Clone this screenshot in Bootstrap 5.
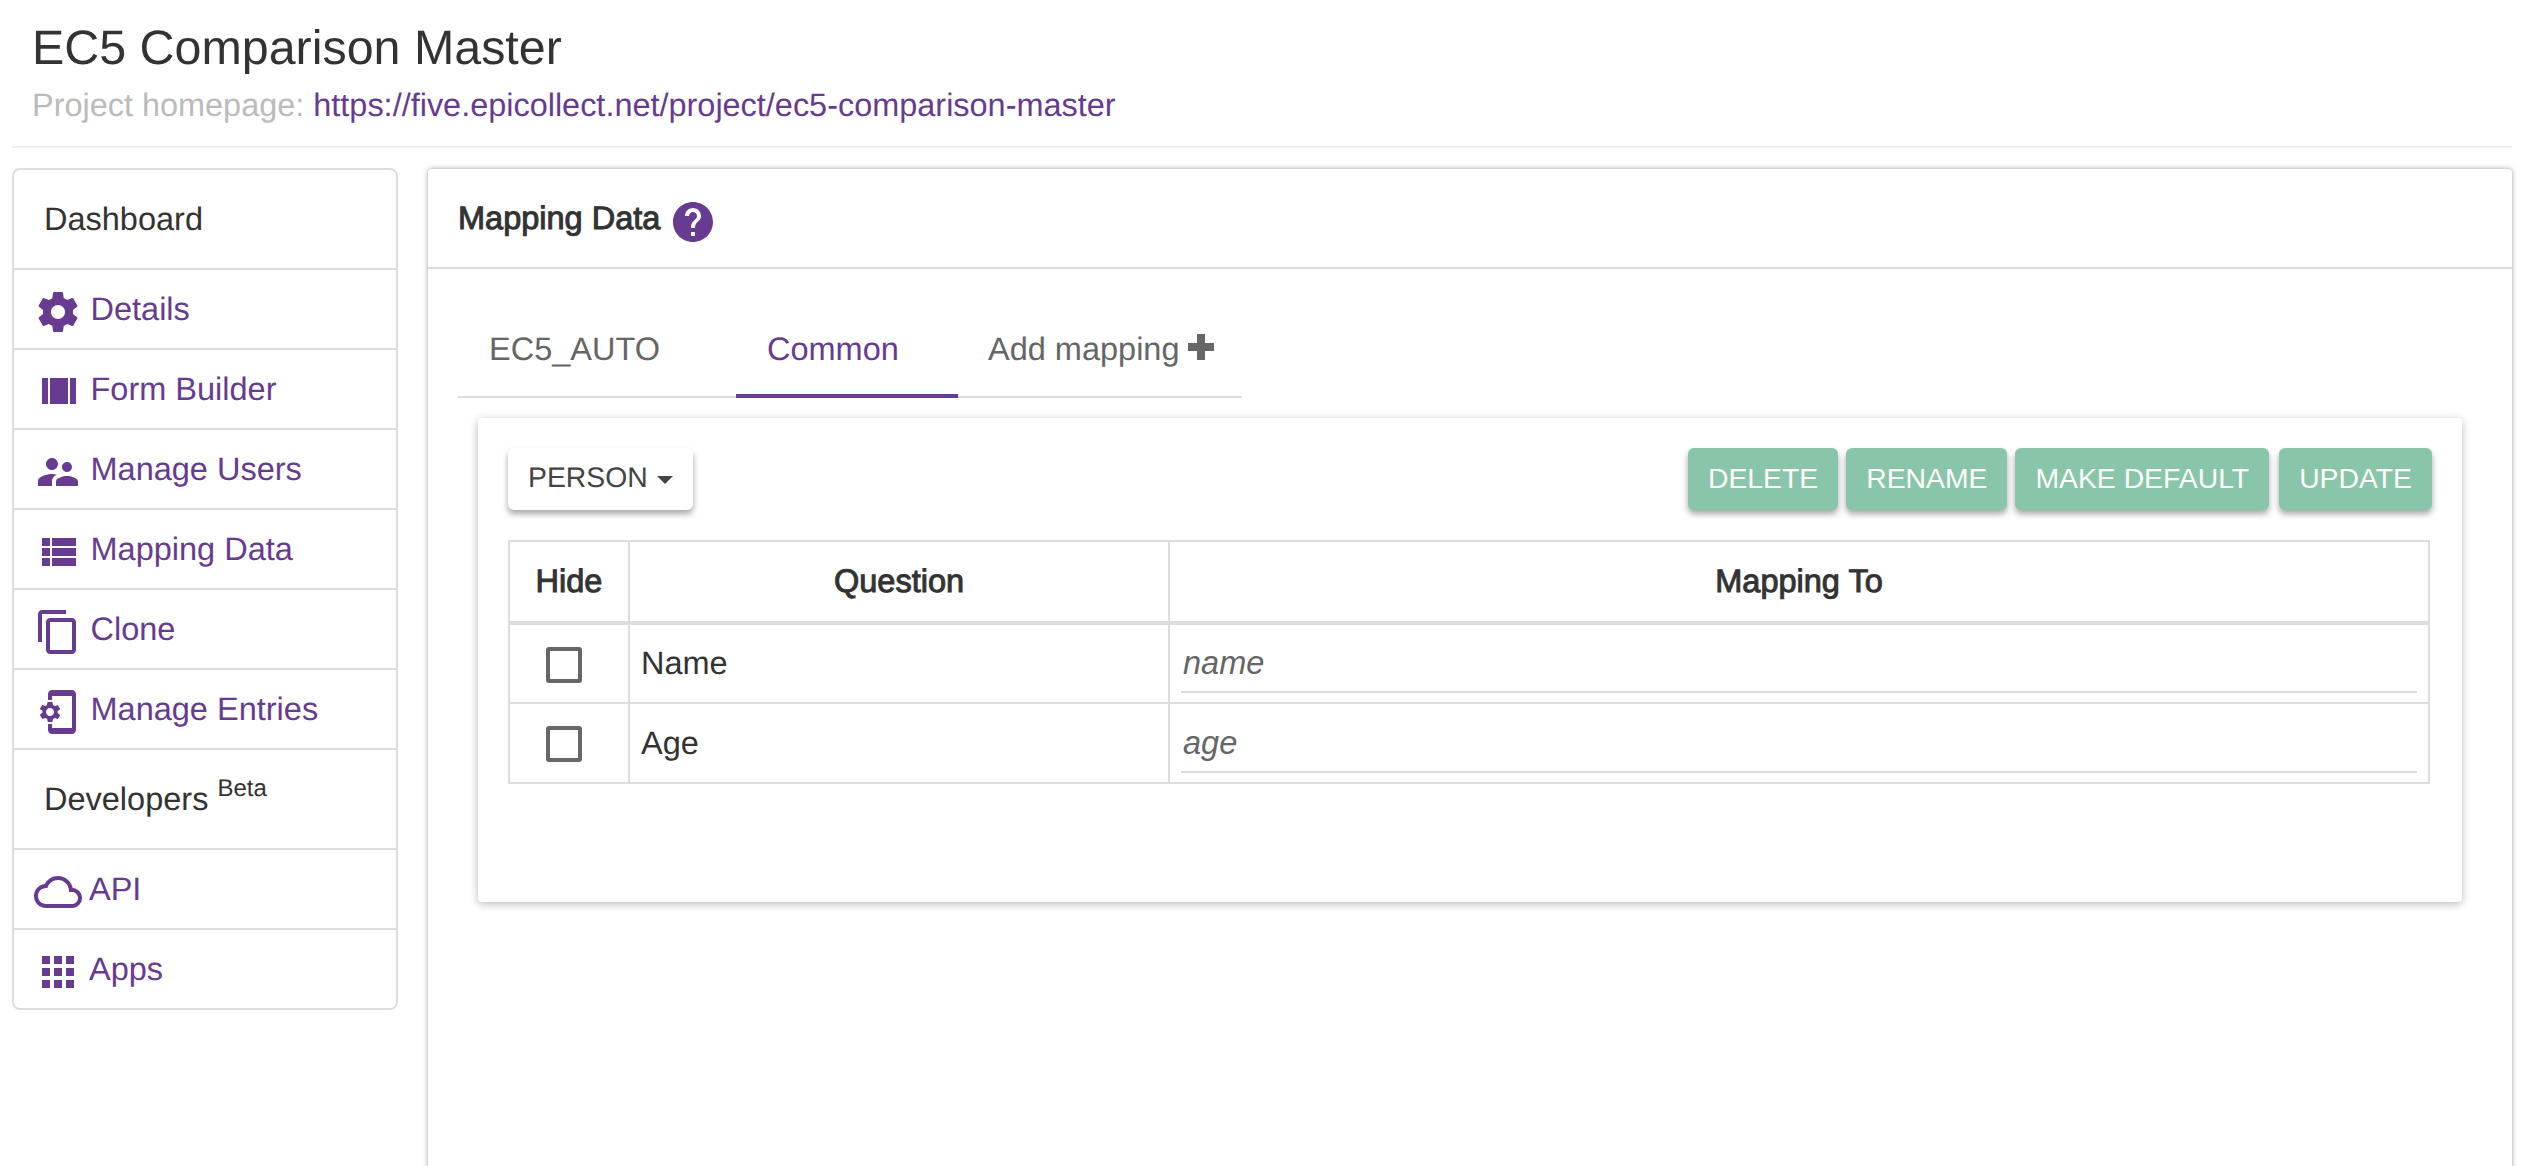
<!DOCTYPE html>
<html lang="en">
<head>
<meta charset="utf-8">
<title>Mapping Data</title>
<link rel="stylesheet" href="https://cdn.jsdelivr.net/npm/bootstrap@5.3.0/dist/css/bootstrap.min.css">
<style>
html,body{height:100%;overflow:hidden}
body{font-family:"Liberation Sans",Arial,sans-serif;font-size:32.5px;color:#333;background:#fff;text-rendering:geometricPrecision}
a{color:#673c90;text-decoration:none}
.shell{height:100%;display:flex;flex-direction:column;padding:0 20px 0 12px}
.page-head{height:148px;border-bottom:2px solid #eee;padding:21px 0 0 20px;flex:none}
.page-title{font-size:48.4px;line-height:55px;font-weight:400;margin:0;color:#333}
.page-sub{font-size:32.45px;line-height:36px;color:#bbb;display:block;margin-top:11px}
.body-row{display:flex;gap:30px;flex:1;min-height:0;padding-top:20px}
.side-menu{width:386px;flex:none;align-self:flex-start;border:2px solid #ddd;border-radius:8px;overflow:hidden}
.side-item{height:80px;border-top:2px solid #ddd;display:flex;align-items:center;gap:8.5px;padding-left:20px;color:#673c90}
.side-item.tight{gap:7px}
.side-head{height:100px;border-top:2px solid #ddd;display:flex;align-items:center;padding-left:30px;color:#333}
.side-head:first-child{border-top:0;height:98px;padding-top:1px}
.side-head sup{font-size:24px;top:-.4em;margin-left:9px;line-height:0}
.side-ico{width:48px;height:48px;fill:#673c90;flex:none;margin-top:6px}
.main-panel{flex:1;min-width:0;border-radius:4px 4px 0 0;box-shadow:0 0 5px rgba(0,0,0,.4);background:#fff;margin:1px 0 -10px}
.panel-top{height:100px;border-bottom:2px solid #ddd;display:flex;align-items:center;padding:0 30px;gap:10px}
.stroke-txt{-webkit-text-stroke:1px currentColor}
.help-ico{width:48px;height:48px;fill:#673c90;margin:8px 0 0 -1px}
.panel-body{padding:30px 30px 0}
.tab-row{width:784px;height:99px;display:flex;border-bottom:2px solid #ddd}
.tab-cell{height:99px;padding:5px 30px 0 31px;display:flex;align-items:center;gap:8px;color:#666;border-bottom:4px solid transparent}
.tab-cell.on{color:#673c90;border-bottom-color:#673c90}
.tab-one{width:278px}
.tab-two{width:222px}
.tab-three{padding-left:30px;padding-right:0;white-space:nowrap}
.plus-ico{width:26px;height:26px;fill:#666;margin-top:-5px}
.map-card{margin:20px 20px 0;height:484px;background:#fff;border-radius:4px;box-shadow:0 2px 8px rgba(0,0,0,.28);padding:30px 32px 0 30px}
.tool-row{display:flex;justify-content:space-between}
.tool-right{display:flex;gap:8px;margin-right:-2px}
.raised{height:62px;font-size:28.35px;line-height:58px;padding:0 20px 2px;border:0;border-radius:6px;box-shadow:0 4px 6px rgba(0,0,0,.35);white-space:nowrap}
.raised-white{background:#fff;color:#444;display:flex;align-items:center;gap:9px}
.raised-green{background:#89c5a8;color:#fff}
.raised-last{margin-left:2px}
.caret-down{width:0;height:0;border:8px solid transparent;border-top-color:#444;border-bottom:0;margin-top:4px}
.map-table{width:1922px;margin-top:30px;table-layout:fixed;border-collapse:collapse;margin-bottom:0}
.map-table th,.map-table td{border:2px solid #ddd;padding:0;vertical-align:middle}
.map-table th{height:82px;border-bottom-width:4px;text-align:center;font-weight:400;color:#333;padding-bottom:1px}
.map-table td{height:80px;color:#333}
.name-cell{padding-left:11px!important}
.hide-box{width:36px;height:36px;border:4px solid #666;border-radius:3px;margin:2px 0 0 36px}
.map-input{display:block;width:calc(100% - 22px);margin:2px 11px 0;height:57px;border:0;border-bottom:2px solid #ddd;background:none;font-size:32.5px;font-style:italic;color:#666;padding:0 2px;outline:0;font-family:inherit}
.map-input::placeholder{color:#666;opacity:1}
</style>
</head>
<body>
<div class="shell">
  <header class="page-head">
    <h3 class="page-title">EC5 Comparison Master</h3>
    <span class="page-sub">Project homepage: <a href="#">https://five.epicollect.net/project/ec5-comparison-master</a></span>
  </header>
  <div class="body-row">
    <nav class="side-menu">
      <div class="side-head">Dashboard</div>
      <a class="side-item" href="#"><svg class="side-ico" viewBox="0 0 24 24"><path d="M19.43 12.98c.04-.32.07-.64.07-.98s-.03-.66-.07-.98l2.11-1.65c.19-.15.24-.42.12-.64l-2-3.46c-.12-.22-.39-.3-.61-.22l-2.49 1c-.52-.4-1.08-.73-1.69-.98l-.38-2.65C14.46 2.18 14.25 2 14 2h-4c-.25 0-.46.18-.49.42l-.38 2.65c-.61.25-1.17.59-1.69.98l-2.49-1c-.23-.09-.49 0-.61.22l-2 3.46c-.13.22-.07.49.12.64l2.11 1.65c-.04.32-.07.65-.07.98s.03.66.07.98l-2.11 1.65c-.19.15-.24.42-.12.64l2 3.46c.12.22.39.3.61.22l2.49-1c.52.4 1.08.73 1.69.98l.38 2.65c.03.24.24.42.49.42h4c.25 0 .46-.18.49-.42l.38-2.65c.61-.25 1.17-.59 1.69-.98l2.49 1c.23.09.49 0 .61-.22l2-3.46c.12-.22.07-.49-.12-.64l-2.11-1.65zM12 15.5c-1.93 0-3.5-1.57-3.5-3.5s1.57-3.5 3.5-3.5 3.5 1.57 3.5 3.5-1.57 3.5-3.5 3.5z"/></svg>Details</a>
      <a class="side-item" href="#"><svg class="side-ico" viewBox="0 0 24 24"><path d="M4 18h3V5H4v13zM18 5v13h3V5h-3zM8 18h9V5H8v13z"/></svg>Form Builder</a>
      <a class="side-item" href="#"><svg class="side-ico" viewBox="0 0 24 24"><path d="M16.5 12c1.38 0 2.49-1.12 2.49-2.5S17.88 7 16.5 7C15.12 7 14 8.12 14 9.5s1.12 2.5 2.5 2.5zM9 11c1.66 0 2.99-1.34 2.99-3S10.66 5 9 5C7.34 5 6 6.34 6 8s1.34 3 3 3zm7.5 3c-1.83 0-5.5.92-5.5 2.75V19h11v-2.25c0-1.83-3.67-2.75-5.5-2.75zM9 13c-2.33 0-7 1.17-7 3.5V19h7v-2.25c0-.85.33-2.34 2.37-3.47C10.5 13.1 9.66 13 9 13z"/></svg>Manage Users</a>
      <a class="side-item" href="#"><svg class="side-ico" viewBox="0 0 24 24"><path d="M4 14h4v-4H4v4zm0 5h4v-4H4v4zM4 9h4V5H4v4zm5 5h12v-4H9v4zm0 5h12v-4H9v4zM9 5v4h12V5H9z"/></svg>Mapping Data</a>
      <a class="side-item" href="#"><svg class="side-ico" viewBox="0 0 24 24"><path d="M16 1H4c-1.1 0-2 .9-2 2v14h2V3h12V1zm3 4H8c-1.1 0-2 .9-2 2v14c0 1.1.9 2 2 2h11c1.1 0 2-.9 2-2V7c0-1.1-.9-2-2-2zm0 16H8V7h11v14z"/></svg>Clone</a>
      <a class="side-item" href="#"><svg class="side-ico" viewBox="0 0 24 24"><path d="M11.8 12.5v-1l1.1-.8c.1-.1.1-.2.1-.3l-1-1.7c-.1-.1-.2-.2-.3-.1l-1.3.4c-.3-.2-.6-.4-.9-.5l-.2-1.3c0-.1-.1-.2-.3-.2H7c-.1 0-.2.1-.3.2l-.2 1.3c-.3.1-.6.3-.9.5l-1.3-.5c-.1 0-.2 0-.3.1l-1 1.7c-.1.1 0 .2.1.3l1.1.8v1l-1.1.8c-.1.2-.1.3-.1.4l1 1.7c.1.1.2.2.3.1l1.4-.4c.3.2.6.4.9.5l.2 1.3c-.1.1.1.2.2.2h2c.1 0 .2-.1.3-.2l.2-1.3c.3-.1.6-.3.9-.5l1.3.5c.1 0 .2 0 .3-.1l1-1.7c.1-.1 0-.2-.1-.3l-1.1-.9zM8 14c-1.1 0-2-.9-2-2s.9-2 2-2 2 .9 2 2-.9 2-2 2zM19 1H9c-1.1 0-2 .9-2 2v3h2V4h10v16H9v-2H7v3c0 1.1.9 2 2 2h10c1.1 0 2-.9 2-2V3c0-1.1-.9-2-2-2z"/></svg>Manage Entries</a>
      <div class="side-head">Developers <sup>Beta</sup></div>
      <a class="side-item tight" href="#"><svg class="side-ico" viewBox="0 0 24 24"><path d="M19.35 10.04C18.67 6.59 15.64 4 12 4 9.11 4 6.6 5.64 5.35 8.04 2.34 8.36 0 10.91 0 14c0 3.31 2.69 6 6 6h13c2.76 0 5-2.24 5-5 0-2.64-2.05-4.78-4.65-4.96zM19 18H6c-2.21 0-4-1.79-4-4s1.79-4 4-4h.71C7.37 7.69 9.48 6 12 6c3.04 0 5.5 2.46 5.5 5.5v.5H19c1.66 0 3 1.34 3 3s-1.34 3-3 3z"/></svg>API</a>
      <a class="side-item tight" href="#"><svg class="side-ico" viewBox="0 0 24 24"><path d="M4 8h4V4H4v4zm6 12h4v-4h-4v4zm-6 0h4v-4H4v4zm0-6h4v-4H4v4zm6 0h4v-4h-4v4zm6-10v4h4V4h-4zm-6 4h4V4h-4v4zm6 6h4v-4h-4v4zm0 6h4v-4h-4v4z"/></svg>Apps</a>
    </nav>
    <main class="main-panel">
      <div class="panel-top">
        <span class="stroke-txt">Mapping Data</span>
        <svg class="help-ico" viewBox="0 0 24 24"><path d="M12 2C6.48 2 2 6.48 2 12s4.48 10 10 10 10-4.48 10-10S17.52 2 12 2zm1 17h-2v-2h2v2zm2.07-7.75l-.9.92C13.45 12.9 13 13.5 13 15h-2v-.5c0-1.1.45-2.1 1.17-2.83l1.24-1.26c.37-.36.59-.86.59-1.41 0-1.1-.9-2-2-2s-2 .9-2 2H8c0-2.21 1.79-4 4-4s4 1.79 4 4c0 .88-.36 1.68-.93 2.25z"/></svg>
      </div>
      <div class="panel-body">
        <div class="tab-row">
          <div class="tab-cell tab-one">EC5_AUTO</div>
          <div class="tab-cell tab-two on">Common</div>
          <div class="tab-cell tab-three">Add mapping <svg class="plus-ico" viewBox="0 0 26 26"><path d="M9 0h8v9h9v8h-9v9H9v-9H0V9h9z"/></svg></div>
        </div>
        <div class="map-card">
          <div class="tool-row">
            <div class="raised raised-white">PERSON<span class="caret-down"></span></div>
            <div class="tool-right">
              <button class="raised raised-green" type="button">DELETE</button>
              <button class="raised raised-green" type="button">RENAME</button>
              <button class="raised raised-green" type="button">MAKE DEFAULT</button>
              <button class="raised raised-green raised-last" type="button">UPDATE</button>
            </div>
          </div>
          <table class="map-table">
            <colgroup><col style="width:120px"><col style="width:540px"><col></colgroup>
            <thead><tr><th class="stroke-txt">Hide</th><th class="stroke-txt">Question</th><th class="stroke-txt">Mapping To</th></tr></thead>
            <tbody>
              <tr><td><div class="hide-box"></div></td><td class="name-cell">Name</td><td><input class="map-input" value="" placeholder="name"></td></tr>
              <tr><td><div class="hide-box"></div></td><td class="name-cell">Age</td><td><input class="map-input" value="" placeholder="age"></td></tr>
            </tbody>
          </table>
        </div>
      </div>
    </main>
  </div>
</div>
<script src="https://cdn.jsdelivr.net/npm/bootstrap@5.3.0/dist/js/bootstrap.bundle.min.js"></script>
</body>
</html>
